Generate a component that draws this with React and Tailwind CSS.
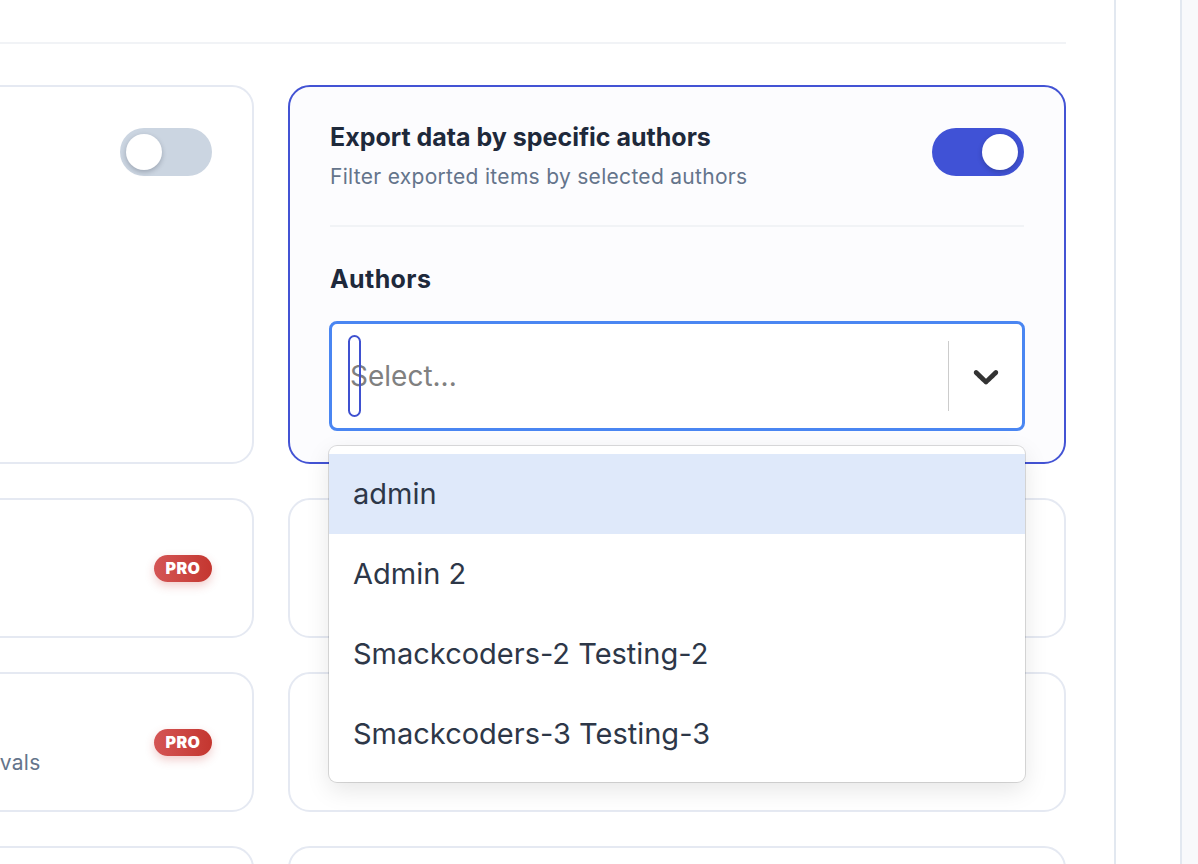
import { useState } from 'react';

const AUTHORS = ['admin', 'Admin 2', 'Smackcoders-2 Testing-2', 'Smackcoders-3 Testing-3'];

function Toggle({ on }) {
  return (
    <div
      className={`w-[92px] h-[48px] rounded-full p-[6px] flex shrink-0 ${
        on ? 'bg-[#4052d6] justify-end' : 'bg-[#cbd5e1] justify-start'
      }`}
    >
      <div className="w-[36px] h-[36px] rounded-full bg-white shadow-[0_2px_5px_rgba(15,23,42,0.25)]" />
    </div>
  );
}

function ProBadge() {
  return (
    <span className="w-[58px] h-[27px] rounded-full bg-gradient-to-r from-[#d45555] to-[#c4362f] text-white text-[16px] font-black tracking-[0.03em] flex items-center justify-center shrink-0 shadow-[0_4px_10px_rgba(200,60,55,0.25)]">
      PRO
    </span>
  );
}

function SimpleCard({ title, subtitle, pro, toggle }) {
  return (
    <div className="h-[140px] rounded-[22px] border-2 border-[#e5e9f2] bg-white px-[40px] flex items-center justify-between gap-6">
      <div className="min-w-0">
        <p className="text-[25px] leading-[30px] font-bold text-[#1e293b] whitespace-nowrap">{title}</p>
        <p className="mt-[11px] text-[21px] leading-[28px] tracking-[0.3px] text-[#64748b] whitespace-nowrap">{subtitle}</p>
      </div>
      {pro && <ProBadge />}
      {toggle && <Toggle on={false} />}
    </div>
  );
}

function AuthorSelect() {
  const [active] = useState(0);
  return (
    <div className="relative">
      <div className="h-[110px] rounded-[8px] border-[3px] border-[#4a86f2] bg-white flex items-center">
        <div className="relative flex-1 pl-[18px] flex items-center">
          <span className="text-[28px] text-[#808080]">Select...</span>
          <span className="absolute left-[16px] top-1/2 -translate-y-1/2 w-[13px] h-[82px] rounded-full border-2 border-[#3f51d0]" />
        </div>
        <div className="w-px h-[70px] bg-[#cccccc]" />
        <div className="w-[73px] flex items-center justify-center">
          <svg width="42" height="42" viewBox="0 0 20 20" fill="#333333">
            <path d="M4.516 7.548c0.436-0.446 1.043-0.481 1.576 0l3.908 3.747 3.908-3.747c0.533-0.481 1.141-0.446 1.574 0 0.436 0.445 0.408 1.197 0 1.615-0.406 0.418-4.695 4.502-4.695 4.502-0.217 0.223-0.502 0.335-0.787 0.335s-0.57-0.112-0.789-0.335c0 0-4.287-4.084-4.695-4.502s-0.436-1.17 0-1.615z" />
          </svg>
        </div>
      </div>

      {/* menu ouvert */}
      <div className="absolute left-0 right-0 top-[125px] z-10 bg-white rounded-[8px] py-[8px] shadow-[0_0_0_1px_rgba(0,0,0,0.13),0_8px_24px_rgba(0,0,0,0.1)]">
        {AUTHORS.map((name, idx) => (
          <div
            key={name}
            className={`h-[80px] px-[24px] flex items-center text-[29px] text-[#2d3748] ${
              idx === active ? 'bg-[#dfe9fa]' : ''
            }`}
          >
            {name}
          </div>
        ))}
      </div>
    </div>
  );
}

export default function App() {
  return (
    <div className="h-screen flex bg-white overflow-hidden font-['Inter',sans-serif]">
      <main className="w-[1114px] shrink-0 overflow-hidden">
        <div className="w-[1066px] h-[44px] border-b-2 border-[#f1f3f6]" />

        <div className="mt-[41px] ml-[-524px] grid grid-cols-[778px_778px] gap-x-[34px] gap-y-[34px]">
          {/* ligne 1 */}
          <div className="h-[379px] rounded-[22px] border-2 border-[#e5e9f2] bg-white px-[40px] pt-[35px] flex items-start justify-between">
            <div>
              <p className="text-[25px] leading-[30px] font-bold text-[#1e293b]">Export all posts</p>
              <p className="mt-[11px] text-[21px] leading-[28px] tracking-[0.3px] text-[#64748b]">Include every post type</p>
            </div>
            <div className="mt-[6px]">
              <Toggle on={false} />
            </div>
          </div>

          <div className="h-[379px] rounded-[22px] border-2 border-[#4353d4] bg-[#fcfcfe] px-[40px] pt-[35px]">
            <div className="flex items-start justify-between">
              <div>
                <p className="text-[25px] leading-[30px] font-bold text-[#1e293b]">Export data by specific authors</p>
                <p className="mt-[11px] text-[21px] leading-[28px] tracking-[0.3px] text-[#64748b]">Filter exported items by selected authors</p>
              </div>
              <div className="mt-[6px]">
                <Toggle on />
              </div>
            </div>
            <div className="mt-[34px] h-[2px] bg-[#f1f3f6]" />
            <p className="mt-[37px] text-[25px] leading-[30px] font-bold tracking-[0.4px] text-[#1e293b]">Authors</p>
            <div className="mt-[27px] -mx-[1px]">
              <AuthorSelect />
            </div>
          </div>

          {/* ligne 2 */}
          <SimpleCard title="Export with custom fields" subtitle="Include ACF field values" pro />
          <SimpleCard title="Export by date range" subtitle="Limit exported items to a period" toggle />

          {/* ligne 3 */}
          <SimpleCard title="Scheduled export" subtitle="Run automatic exports at fixed, scheduled intervals" pro />
          <SimpleCard title="Export by post status" subtitle="Choose published, draft or pending items" toggle />

          {/* ligne 4 */}
          <SimpleCard title="Export by category" subtitle="Filter items by taxonomy terms" pro />
          <SimpleCard title="Export by taxonomy" subtitle="Filter by tags and custom taxonomies" toggle />
        </div>
      </main>
      <div className="w-[2px] shrink-0 bg-[#e2e8f0]" />
      <div className="w-[64px] shrink-0 bg-white" />
      <div className="w-[2px] shrink-0 bg-[#e2e8f0]" />
      <div className="flex-1 bg-[#f8f9fb]" />
    </div>
  );
}
